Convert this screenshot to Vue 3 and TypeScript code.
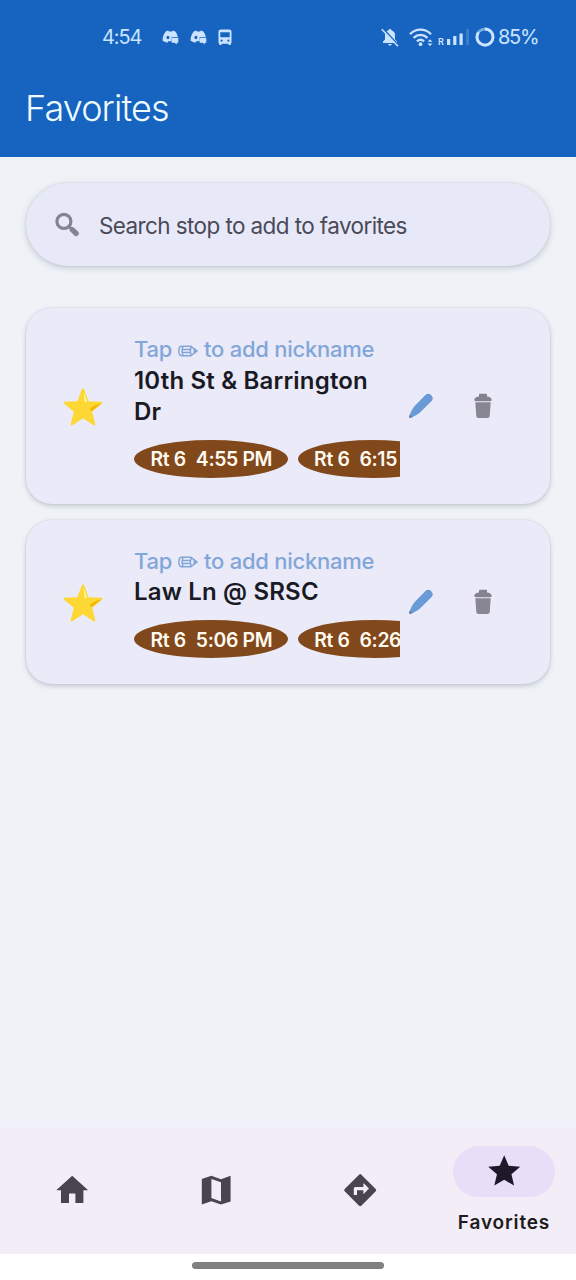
<script setup lang="ts">
interface Departure {
  route: string
  time: string
}
interface Stop {
  id: number
  lines: string[]
  departures: Departure[]
}

const stops: Stop[] = [
  {
    id: 1,
    lines: ['10th St & Barrington', 'Dr'],
    departures: [
      { route: 'Rt 6', time: '4:55 PM' },
      { route: 'Rt 6', time: '6:15 PM' },
    ],
  },
  {
    id: 2,
    lines: ['Law Ln @ SRSC'],
    departures: [
      { route: 'Rt 6', time: '5:06 PM' },
      { route: 'Rt 6', time: '6:26 PM' },
    ],
  },
]

const tabs = [
  { name: 'Home', path: 'M10 20v-6h4v6h5v-8h3L12 3 2 12h3v8z' },
  {
    name: 'Map',
    path: 'M21 3l-6 2.100L9 3 3 5v16l6-2.100 6 2.100 6-2zM15 19l-6-2.110V5l6 2.110z',
  },
  {
    name: 'Directions',
    path: 'M21.71 11.29l-9-9a.996.996 0 00-1.41 0l-9 9a.996.996 0 000 1.41l9 9c.39.39 1.02.39 1.41 0l9-9a.996.996 0 000-1.41zM14 14.5V12h-4v3H8v-4c0-.55.45-1 1-1h5V7.5l3.500 3.500-3.500 3.500z',
  },
]
</script>

<template>
  <div class="screen">
    <header class="top">
      <div class="status">
        <span class="clock">4:54</span>
        <svg v-for="n in 2" :key="n" class="chat" viewBox="0 0 18 16">
          <path fill-rule="evenodd" d="M4.200 1.300 6.500.600l.8 1h3.400l.8-1 2.300.700c1.700 1.900 2.700 4 2.900 6.200H10.200v4.500H6.500l-.8 1.500C3.600 13.200 1.700 12.400.500 11.300.500 7.500 1.800 3.900 4.200 1.300zM6.300 6.200c-2.100 0-2.100 3.700 0 3.700s2.100-3.700 0-3.700z" />
          <path d="M10.300 8.300h7v5.200h-1.700v2l-2.200-2h-3.100z" />
        </svg>
        <svg class="bus" viewBox="0 0 14 17">
          <path fill-rule="evenodd" d="M3 .5h8c1.700 0 2.500.8 2.500 2.300v10.400c0 .7-.3 1.200-.8 1.500V16h-2.200v-1.200h-7V16H1.300v-1.300c-.5-.3-.8-.8-.8-1.500V2.800C.5 1.300 1.300.5 3 .5zM2.300 3.300v4.900h9.400V3.300zM3.600 10.600a1.100 1.100 0 100 2.200 1.100 1.100 0 000-2.200zm6.800 0a1.100 1.100 0 100 2.200 1.100 1.100 0 000-2.200z" />
        </svg>
        <svg class="bell" viewBox="0 0 18 19">
          <path d="M9 1c.8 0 1.400.6 1.400 1.300 2.200.6 3.600 2.400 3.600 4.700v4.500l2 2V15H2v-1.500l2-2V7c0-2.300 1.400-4.100 3.600-4.700C7.600 1.600 8.200 1 9 1zM7.200 16h3.600c-.3 1-1 1.600-1.800 1.600S7.500 17 7.200 16z" />
          <path class="slash-gap" d="M2 1 18 18" />
          <path class="slash" d="M.8 1.200 17 18.200" />
        </svg>
        <svg class="wifi" viewBox="0 0 25 19">
          <g fill="none" stroke="currentColor" stroke-width="2.300">
            <path d="M1 6.200C7 .2 16 .2 22 6.200" />
            <path d="M4.500 9.900c4.200-4 9.800-4 14 0" />
            <path d="M7.900 13.400c2.200-2 5-2 7.200 0" />
          </g>
          <circle cx="11.500" cy="16.200" r="1.900" />
          <path d="M18.500 13.700 21 11.200l2.500 2.500zM18.500 15.400h5L21 17.900z" />
        </svg>
        <span class="roam">R</span>
        <svg class="bars" viewBox="0 0 23 18">
          <path d="M0 11h3.200v6H0zM6.200 8h3.200v9H6.200zM12.500 5.500h3.200V17h-3.200z" />
          <path d="M19 1h3v16h-3z" opacity=".2" />
        </svg>
        <svg class="ring" viewBox="0 0 20 20">
          <circle cx="10" cy="10" r="8" fill="none" stroke="currentColor" stroke-width="2.800" opacity=".55" />
          <path d="M10 2A8 8 0 1 1 3.500 5.300" fill="none" stroke="currentColor" stroke-width="2.800" />
        </svg>
        <span class="battery">85%</span>
      </div>
      <h1>Favorites</h1>
    </header>

    <main>
      <div class="search">
        <svg viewBox="0 0 24 24">
          <path d="M14 14 17 17" stroke="#85838f" stroke-width="3" />
          <circle cx="8.900" cy="8.900" r="7" fill="none" stroke="#85838f" stroke-width="3.200" />
          <path d="M17.200 17.200 21.200 21" stroke="#85838f" stroke-width="5.200" stroke-linecap="round" />
        </svg>
        <span>Search stop to add to favorites</span>
      </div>

      <article v-for="stop in stops" :key="stop.id" class="card">
        <svg class="star" viewBox="0 0 40 38">
          <path d="M18.800 1.300c.5-1.100 1.900-1.100 2.400 0l4.400 11.900 12.700.6c1.100.1 1.500 1.300.6 2l-9.800 7.900 3.200 12.300c.3 1.200-.7 1.800-1.700 1.200L20 30.300 9.400 37.200c-1 .6-2 0-1.700-1.200l3.200-12.300-9.800-7.900c-.9-.7-.5-1.900.6-2l12.700-.6z" fill="#fdd835" />
          <path d="M20.700 3.800 24.100 13.200c-.8 1.300-2.200 1.400-2.600.1z" fill="#fff59d" />
          <path d="m38 15.700-9.200 7.300c-1.600-.2-2.100-1.200-1.200-2.400 2.200-2.800 5.600-4.200 10.400-4.900z" fill="#f4b400" />
        </svg>
        <div class="info">
          <div class="hint">
            Tap
            <svg viewBox="0 0 20 12" fill="none" stroke="currentColor" stroke-width="1.500" stroke-linejoin="round">
              <path d="M3.500 1.300h9.500L19 6l-6 4.700H3.500C0 10.700 0 1.300 3.500 1.300zM5 1.500C3.800 4.500 3.800 7.500 5 10.500M13.300 1.600c-1.200 2.800-1.200 6 0 8.800M4.500 4.500h8M4.500 7.500h8" />
              <path d="m16.300 4.200 2.500 1.800-2.500 1.800z" fill="currentColor" />
            </svg>
            to add nickname
          </div>
          <h2><span v-for="line in stop.lines" :key="line">{{ line }}</span></h2>
          <div class="chips">
            <div v-for="d in stop.departures" :key="d.time" class="chip">
              <span>{{ d.route }}</span><span>{{ d.time }}</span>
            </div>
          </div>
        </div>
        <svg class="pencil" viewBox="0 0 26 26">
          <path d="M17.200 2.200c1.700-1.700 3.800-1.800 5.300-.6l1.400 1.400c1.300 1.700 1.100 3.600-.5 5.200L12.800 18.800c-1.900 1.900-5.300 4.200-9.900 6-1.300.5-2.200-.3-1.700-1.600 1.500-4.200 3.700-8.300 5.500-10.300z" fill="#6b9bd6" />
          <path d="m1.900 21.400 2.800 2.700c-.7.300-1.300.5-1.800.7-1.300.5-2.200-.3-1.700-1.600z" fill="#6883ad" />
        </svg>
        <svg class="trash" viewBox="0 0 18 26">
          <path d="M6 .7h6c.7 0 1 .4 1 1v1.700c2.400.3 4.500 1.300 4.700 3.200.1 1-.5 1.700-1.700 1.700H2C.8 8.300.2 7.600.3 6.600.5 4.700 2.600 3.700 5 3.400V1.700c0-.6.3-1 1-1z" fill="#85828f" />
          <path d="M1.300 9.200h15.400l-1 13.700c-.1 1.300-1 1.900-2.200 2-3 .2-6 .2-9 0-1.200-.1-2.100-.7-2.200-2z" fill="#898693" />
        </svg>
      </article>
    </main>

    <nav>
      <div v-for="tab in tabs" :key="tab.name" class="tab">
        <svg viewBox="0 0 24 24"><path :d="tab.path" /></svg>
      </div>
      <div class="tab active">
        <div class="pill">
          <svg viewBox="0 0 24 24">
            <path d="M12 17.270 18.180 21l-1.640-7.030L22 9.240l-7.190-.610L12 2 9.190 8.630 2 9.240l5.460 4.730L5.820 21z" />
          </svg>
        </div>
        <span>Favorites</span>
      </div>
    </nav>
    <footer><div class="handle"></div></footer>
  </div>
</template>

<style>
body {
  background: #fff;
}
</style>

<style scoped>
.screen {
  width: 576px;
  height: 1280px;
  display: flex;
  flex-direction: column;
  overflow: hidden;
  background: #eff3f8;
  font-family: Inter, "Open Sans", sans-serif;
  box-sizing: border-box;
}
svg {
  display: block;
  flex: none;
}
.top {
  height: 157px;
  background: #1664c0;
  flex: none;
}
.status {
  display: flex;
  align-items: center;
  height: 74px;
  padding-left: 102px;
  color: #cbe3ff;
  fill: currentColor;
  font-size: 20px;
  white-space: nowrap;
}
.clock {
  width: 60px;
  letter-spacing: -1.1px;
}
.chat {
  width: 17px;
  height: 15px;
  margin-right: 11px;
}
.bus {
  width: 14px;
  height: 17px;
}
.bell {
  width: 18px;
  height: 19px;
  margin-left: 149px;
}
.slash-gap {
  stroke: #1664c0;
  stroke-width: 2;
}
.slash {
  stroke: currentColor;
  stroke-width: 1.6;
}
.wifi {
  width: 25px;
  height: 19px;
  margin-left: 10px;
}
.roam {
  font-size: 9px;
  font-weight: 600;
  margin: 9px 2px 0 4px;
  width: 7px;
}
.bars {
  width: 23px;
  height: 18px;
}
.ring {
  width: 20px;
  height: 20px;
  margin-left: 5px;
}
.battery {
  margin-left: 3px;
  letter-spacing: -1.3px;
}
h1 {
  margin: 12px 0 0 25px;
  font-size: 36px;
  line-height: 44px;
  font-weight: 340;
  letter-spacing: -0.9px;
  color: #f0fbff;
}
main {
  flex: 1;
  padding: 26px 26px 0;
}
.search {
  display: flex;
  align-items: center;
  height: 83px;
  border-radius: 42px;
  padding-left: 29px;
  background: #e7e9f9;
  box-shadow: 0 2px 6px rgba(60, 65, 80, 0.24), 0 0 2px rgba(60, 65, 80, 0.12);
  margin-bottom: 42px;
  box-sizing: border-box;
}
.search svg {
  width: 24px;
  height: 25px;
}
.search span {
  margin: 1px 0 0 20px;
  font-size: 22.5px;
  letter-spacing: -0.6px;
  color: #4b4957;
  white-space: nowrap;
}
.card {
  display: flex;
  align-items: center;
  box-sizing: border-box;
  padding: 26px 0 26px 37px;
  border-radius: 26px;
  background: #eaeaf8;
  box-shadow: 0 2px 5px rgba(60, 65, 80, 0.24), 0 0 2px rgba(60, 65, 80, 0.12);
  margin-bottom: 16px;
}
.star {
  width: 40px;
  height: 38px;
  margin-top: 3px;
}
.info {
  width: 266px;
  margin-left: 31px;
  overflow: hidden;
  flex: none;
}
.hint {
  display: flex;
  align-items: center;
  height: 30.5px;
  font-size: 22px;
  font-weight: 500;
  letter-spacing: -0.26px;
  line-height: 28px;
  color: #83a6d8;
  white-space: nowrap;
}
.hint svg {
  width: 20px;
  height: 12px;
  margin: 3px 6px 0;
}
h2 {
  margin: 0;
  font-size: 24px;
  font-weight: 600;
  line-height: 31px;
  letter-spacing: 0.18px;
  color: #1a1a24;
  white-space: nowrap;
}
h2 span {
  display: block;
}
.chips {
  display: flex;
  gap: 10px;
  margin-top: 13px;
}
.chip {
  display: flex;
  align-items: center;
  gap: 10px;
  flex: none;
  height: 38px;
  padding: 1px 15.5px 0 16.5px;
  box-sizing: border-box;
  border-radius: 50%;
  background: #81481c;
  color: #fffaf0;
  font-size: 19.4px;
  font-weight: 600;
  letter-spacing: -0.36px;
  white-space: nowrap;
}
.pencil {
  width: 26px;
  height: 26px;
  margin-left: 8px;
}
.trash {
  width: 18px;
  height: 26px;
  margin-left: 40px;
}
nav {
  display: flex;
  height: 127px;
  flex: none;
  background: #f3edf7;
  border-top: 7px solid #eff1fb;
}
.tab {
  width: 144px;
  display: flex;
  flex-direction: column;
  align-items: center;
  justify-content: center;
  fill: #49454f;
}
.tab svg {
  width: 38.4px;
  height: 38.4px;
}
.active {
  justify-content: flex-start;
  padding-top: 19px;
  box-sizing: border-box;
  fill: #1d192b;
}
.pill {
  width: 102px;
  height: 51px;
  border-radius: 26px;
  background: #e8def8;
  display: flex;
  align-items: center;
  justify-content: center;
}
.active span {
  margin-top: 14px;
  font-size: 19px;
  line-height: 24px;
  font-weight: 600;
  letter-spacing: 0.85px;
  color: #1d1b20;
}
footer {
  height: 26px;
  flex: none;
  background: #fff;
  display: flex;
  justify-content: center;
}
.handle {
  width: 192px;
  height: 7px;
  margin-top: 8px;
  border-radius: 4px;
  background: #808080;
}
</style>
